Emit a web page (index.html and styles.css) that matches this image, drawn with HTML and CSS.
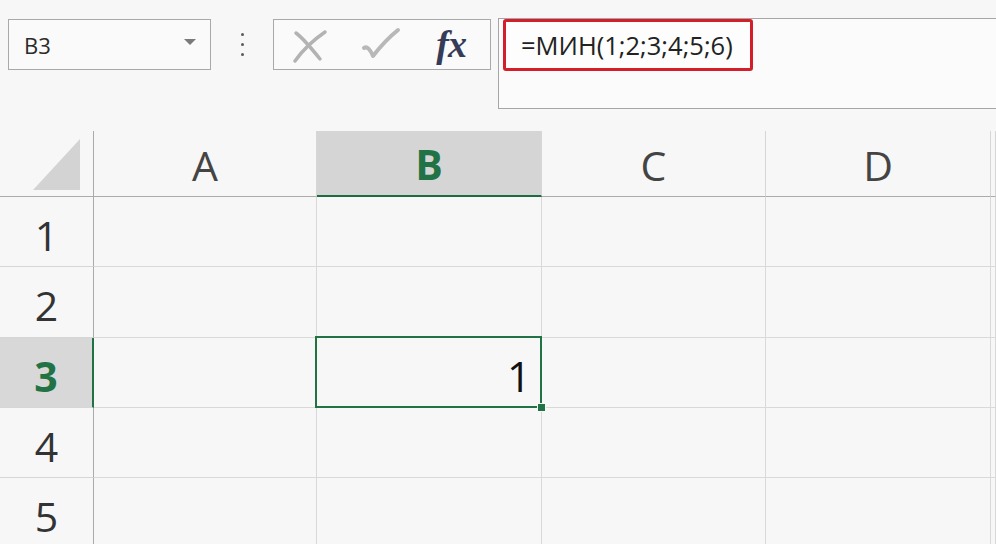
FILE: index.html
```html
<!DOCTYPE html>
<html lang="ru">
    <head>
        <meta charset="UTF-8" />
        <meta name="viewport" content="width=device-width, initial-scale=1.0" />
        <title>МИН</title>
        <link rel="stylesheet" href="styles.css">
    </head>
    <body>
        <div class="ribbon">
            <div class="name-box">
                <span>B3</span>
                <span class="caret"></span>
            </div>
            <div class="grip"><i></i><i></i><i></i></div>
            <div class="fn-buttons">
                <svg class="btn-icon" width="40" height="40" viewBox="0 0 40 40">
                    <path d="M6 8 C14 14 22 24 30 34" stroke="#b3b3b3" stroke-width="3.5" fill="none" stroke-linecap="round" />
                    <path d="M5 36 C12 26 22 16 35 7" stroke="#b3b3b3" stroke-width="3.5" fill="none" stroke-linecap="round" />
                </svg>
                <svg class="btn-icon" width="44" height="40" viewBox="0 0 44 40">
                    <path d="M6 23 C9 21 12 24 15 31 C22 22 30 13 40 5" stroke="#b8b8b8" stroke-width="4" fill="none" stroke-linecap="round" stroke-linejoin="round" />
                </svg>
                <span class="fx">fx</span>
            </div>
            <div class="formula-input">
                <div class="formula-text">=МИН(1;2;3;4;5;6)</div>
            </div>
        </div>

        <div class="sheet">
            <div class="corner"><span class="corner-mark"></span></div>
            <div class="col-head">A</div>
            <div class="col-head active">B</div>
            <div class="col-head">C</div>
            <div class="col-head">D</div>
            <div class="col-head"></div>

            <div class="row-head">1</div>
            <div class="cell"></div><div class="cell"></div><div class="cell"></div><div class="cell"></div><div class="cell"></div>

            <div class="row-head">2</div>
            <div class="cell"></div><div class="cell"></div><div class="cell"></div><div class="cell"></div><div class="cell"></div>

            <div class="row-head active">3</div>
            <div class="cell"></div>
            <div class="cell selected">1<span class="handle"></span></div>
            <div class="cell"></div><div class="cell"></div><div class="cell"></div>

            <div class="row-head">4</div>
            <div class="cell"></div><div class="cell"></div><div class="cell"></div><div class="cell"></div><div class="cell"></div>

            <div class="row-head">5</div>
            <div class="cell"></div><div class="cell"></div><div class="cell"></div><div class="cell"></div><div class="cell"></div>
        </div>
    </body>
</html>
```

FILE: styles.css
```css
body {
    margin: 0;
    width: 996px;
    height: 544px;
    overflow: hidden;
    background: #f7f7f7;
    color: #333;
    font-family: 'Open Sans', 'Noto Sans', sans-serif;
}

.ribbon {
    display: flex;
    align-items: flex-start;
    height: 131px;
    padding-top: 18px;
    box-sizing: border-box;
}

.name-box {
    display: flex;
    align-items: center;
    justify-content: space-between;
    box-sizing: border-box;
    width: 203px;
    height: 51px;
    margin: 1px 0 0 8px;
    padding: 0 14px 0 15px;
    border: 1px solid #a9a9a9;
    background: #fafafa;
    font-size: 22px;
    color: #2b2b2b;
}
.caret {
    width: 0;
    height: 0;
    border-left: 6px solid transparent;
    border-right: 6px solid transparent;
    border-top: 6px solid #7a7a7a;
    margin-bottom: 5px;
}

.grip {
    display: flex;
    flex-direction: column;
    align-items: center;
    gap: 7px;
    width: 62px;
    padding-top: 15px;
}
.grip i {
    width: 3px;
    height: 3px;
    border-radius: 50%;
    background: #5a5a5a;
}

.fn-buttons {
    display: flex;
    align-items: center;
    box-sizing: border-box;
    width: 218px;
    height: 51px;
    margin-top: 1px;
    padding: 0 24px 0 16px;
    border: 1px solid #a9a9a9;
    background: #fafafa;
}
.btn-icon {
    margin-right: 28px;
}
.fx {
    margin-left: auto;
    margin-top: -2px;
    font-family: 'Liberation Serif', serif;
    font-style: italic;
    font-weight: 700;
    font-size: 38px;
    color: #363c58;
    letter-spacing: -1px;
}

.formula-input {
    flex: 1;
    box-sizing: border-box;
    height: 91px;
    margin-left: 7px;
    padding-left: 4px;
    border: 1px solid #a6a6a6;
    border-right: none;
    background: #fbfbfb;
}
.formula-text {
    display: inline-block;
    box-sizing: border-box;
    width: 250px;
    height: 52px;
    padding: 6px 0 0 15px;
    border: 3px solid #d41f2b;
    border-radius: 3px;
    background: #fdfdfd;
    font-size: 25.5px;
    color: #222;
    white-space: nowrap;
}

.sheet {
    display: grid;
    grid-template-columns: 94px 223px 225px 224px 225px 1fr;
    grid-template-rows: 66px 70px 71px 70px 70px 70px;
}
.sheet > div {
    box-sizing: border-box;
}

.corner {
    position: relative;
    border-right: 1px solid #ababab;
    border-bottom: 1px solid #ababab;
}
.corner-mark {
    position: absolute;
    left: 33px;
    bottom: 6px;
    width: 0;
    height: 0;
    border-left: 47px solid transparent;
    border-bottom: 51px solid #d3d3d3;
}

.col-head {
    display: flex;
    align-items: center;
    justify-content: center;
    border-right: 1px solid #d6d6d6;
    border-bottom: 1px solid #ababab;
    font-size: 41px;
    color: #444;
    padding-top: 2px;
}
.col-head.active {
    background: #d5d5d5;
    border-bottom: 2px solid #1e6b41;
    color: #217346;
    font-weight: 700;
}

.row-head {
    display: flex;
    align-items: center;
    justify-content: center;
    padding-top: 6px;
    border-right: 1px solid #ababab;
    border-bottom: 1px solid #d6d6d6;
    font-size: 41px;
    color: #333;
}
.row-head.active {
    background: #d8d8d8;
    border-right: 2px solid #217346;
    color: #217346;
    font-weight: 700;
}

.cell {
    border-right: 1px solid #d9d9d9;
    border-bottom: 1px solid #d9d9d9;
}
.cell.selected {
    position: relative;
    display: flex;
    align-items: center;
    justify-content: flex-end;
    padding: 6px 10px 0 0;
    font-size: 42px;
    color: #111;
}
.cell.selected::after {
    content: '';
    position: absolute;
    left: -2px;
    top: -2px;
    right: -1px;
    bottom: -1px;
    border: 2px solid #217346;
}
.handle {
    position: absolute;
    right: -5px;
    bottom: -5px;
    width: 7px;
    height: 7px;
    background: #217346;
    border: 1px solid #f7f7f7;
    z-index: 1;
}
```
